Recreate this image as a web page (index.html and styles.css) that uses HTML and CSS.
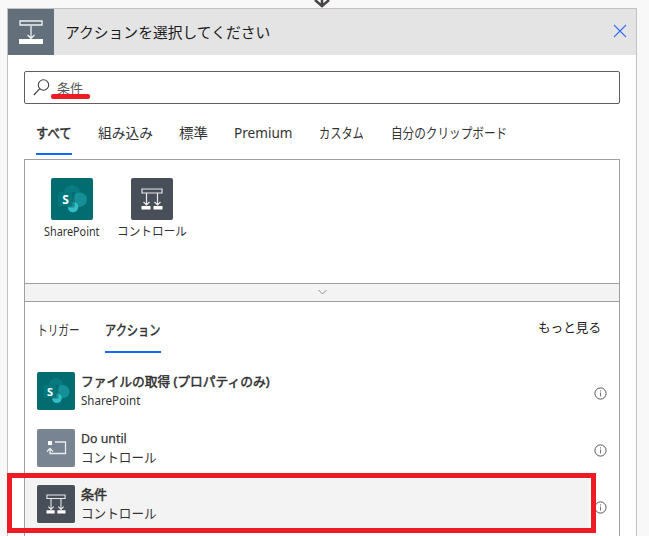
FILE: index.html
```html
<!DOCTYPE html>
<html lang="ja">
<head>
<meta charset="utf-8">
<title>アクションの選択</title>
<link rel="stylesheet" href="styles.css">
</head>
<body>
<svg width="0" height="0" class="defs">
  <symbol id="sharepoint" viewBox="0 0 42 42">
    <rect width="42" height="42" rx="2" fill="#036c70"/>
    <circle cx="21" cy="15" r="8" fill="#087b80"/>
    <circle cx="28.800" cy="21.700" r="7.200" fill="#1a9ba1" opacity=".75"/>
    <circle cx="22" cy="29" r="5.300" fill="#37c6d0" opacity=".9"/>
    <path d="M9 14h13.500q1.500 0 1.500 1.500V28q0 1.500-1.500 1.500H9z" fill="#024f53" opacity=".4"/>
    <rect x="7" y="14" width="14.500" height="14.500" rx="1.200" fill="#03787c"/>
  </symbol>
  <symbol id="control" viewBox="0 0 42 42">
    <rect width="42" height="42" rx="2" fill="#484f58"/>
    <path d="M11 11h20v4H11zM15.500 15.500V27M26.500 15.500V27M12.500 24l3 3 3-3M23.500 24l3 3 3-3" fill="none" stroke="#e8eaec" stroke-width="1.200"/>
    <path d="M10.500 28h9v3.500h-9zM22.500 28h9v3.500h-9z" fill="#fff"/>
  </symbol>
  <symbol id="info" viewBox="0 0 13 13">
    <circle cx="6.500" cy="6.500" r="5.600" fill="none" stroke="#555" stroke-width="1"/>
    <path d="M6.500 5.500v4M6.500 3.300v1.200" stroke="#777" stroke-width="1"/>
  </symbol>
</svg>
<svg class="flow-arrow" width="20" height="9" viewBox="0 0 20 9"><path d="M10 0v6M3 0l7 6 7-6" fill="none" stroke="#484644" stroke-width="2.500"/></svg>
<main class="card">
  <header class="head">
    <svg width="46" height="46" viewBox="0 0 46 46"><rect width="46" height="46" fill="#646f7c"/><path d="M12 12h22v4H12zM23 17v12M19.500 26l3.500 3.300 3.500-3.300" fill="none" stroke="#f0f2f3" stroke-width="1.300"/><path d="M11 30h24v5H11z" fill="#fff"/></svg>
    <h1><span class="title">アクションを選択してください</span></h1>
    <svg class="close" width="14" height="14" viewBox="0 0 14 14"><path d="M1 1l12 12M13 1L1 13" stroke="#3b6ff5" stroke-width="1.200"/></svg>
  </header>
  <div class="search">
    <svg width="17" height="17" viewBox="0 0 17 17"><circle cx="10.500" cy="6" r="5.200" fill="none" stroke="#444" stroke-width="1.100"/><path d="M6.800 9.700L.8 16" stroke="#444" stroke-width="1.200"/></svg>
    <span class="query">条件</span>
  </div>
  <nav class="tabs">
    <div class="tab active t-all"><span>すべて</span></div>
    <div class="tab t-built"><span>組み込み</span></div>
    <div class="tab t-std"><span>標準</span></div>
    <div class="tab t-prem"><span>Premium</span></div>
    <div class="tab t-custom"><span>カスタム</span></div>
    <div class="tab t-clip"><span>自分のクリップボード</span></div>
  </nav>
  <section class="connectors">
    <div class="connector"><div class="sp-icon"><svg width="42" height="42"><use href="#sharepoint"/></svg><i>S</i></div><span class="latin">SharePoint</span></div>
    <div class="connector"><svg width="42" height="42"><use href="#control"/></svg><span>コントロール</span></div>
  </section>
  <div class="collapse"><svg width="9" height="6" viewBox="0 0 9 6"><path d="M.5 1l4 4 4-4" fill="none" stroke="#a08a78" stroke-width="1"/></svg></div>
  <section class="results">
    <div class="result-head">
      <div class="tab t-trigger"><span>トリガー</span></div>
      <div class="tab active t-action"><span>アクション</span></div>
      <div class="more"><span>もっと見る</span></div>
    </div>
    <div class="row first">
      <div class="sp-icon small"><svg width="38" height="38"><use href="#sharepoint"/></svg><i>S</i></div>
      <div class="text"><b class="file">ファイルの取得 (プロパティのみ)</b><span class="sp">SharePoint</span></div>
      <svg class="info" width="13" height="13"><use href="#info"/></svg>
    </div>
    <div class="row">
      <svg width="38" height="38" viewBox="0 0 38 38"><rect width="38" height="38" rx="2" fill="#788491"/><path d="M18 13h10.500v11.500H13V20M10 22.500l3-3 3 3" fill="none" stroke="#e9ecef" stroke-width="1.300"/><path d="M11 12h4v4h-4z" fill="#fff"/></svg>
      <div class="text"><b class="until">Do until</b><span class="ctl">コントロール</span></div>
      <svg class="info" width="13" height="13"><use href="#info"/></svg>
    </div>
    <div class="row chosen">
      <svg width="38" height="38"><use href="#control"/></svg>
      <div class="text"><b>条件</b><span class="ctl">コントロール</span></div>
      <svg class="info" width="13" height="13"><use href="#info"/></svg>
    </div>
  </section>
</main>
<div class="mark-line"></div>
<div class="mark-box"></div>
</body>
</html>
```
FILE: styles.css
```css
* { box-sizing: border-box; }
body {
  margin: 0;
  height: 536px;
  overflow: hidden;
  position: relative;
  background: #f8f8f8;
  color: #333;
  font-family: "Noto Sans", "Noto Sans CJK JP", sans-serif;
}
svg { display: block; flex: none; }
.defs { position: absolute; }
.flow-arrow { position: absolute; left: 312px; top: 0; }

.sp-icon { position: relative; flex: none; }
.sp-icon i {
  position: absolute;
  left: 7px;
  top: 14px;
  width: 15px;
  color: #fff;
  font: 700 12px/15px "Open Sans", sans-serif;
  text-align: center;
}
.small i { left: 6px; top: 12px; width: 14px; font-size: 11px; }

.card {
  margin: 8px 12px 0 7px;
  height: 540px;
  border: 1px solid #c2c2c2;
  background: #fff;
}
.head { display: flex; align-items: center; height: 46px; background: #e4e4e4; }
h1 { margin: 0 0 0 11px; flex: 1; font-size: 15px; font-weight: 400; line-height: 20px; color: #1b1b1b; }
.title { display: inline-block; transform: scaleX(.985); transform-origin: 0 50%; }
.close { margin: 0 9px 3px 0; }

.search {
  display: flex;
  align-items: center;
  height: 33px;
  margin: 16px 16px 0;
  padding-left: 8px;
  border: 1px solid #605e5c;
  border-radius: 2px;
}
.query { margin-left: 7px; font-size: 13px; line-height: 18px; color: #555; }

.tabs { display: flex; gap: 26px; height: 51px; margin: 4px 28px 0; }
.tab { white-space: nowrap; font-size: 14px; line-height: 20px; }
.tabs .tab { height: 47px; padding-top: 15px; }
.tab span { display: inline-block; transform-origin: 0 50%; }
.active { -webkit-text-stroke: .5px #333; border-bottom: 2px solid #0f6bff; }
.t-all { width: 36px; }
.t-all span { transform: scaleX(.88); }
.t-built { width: 55px; }
.t-built span { transform: scaleX(.98); }
.t-std { width: 29px; }
.t-std span { transform: scaleX(1.03); }
.t-prem { width: 59px; }
.t-prem span { transform: scaleX(.97); }
.t-custom { width: 46px; }
.t-custom span { transform: scaleX(.8); }
.t-clip { width: 116px; }
.t-clip span { transform: scaleX(.83); }

.connectors {
  display: flex;
  height: 124px;
  margin: 0 16px;
  padding: 18px 7px 0;
  border: 1px solid #a19f9d;
  border-bottom: 0;
}
.connector { display: flex; flex-direction: column; align-items: center; width: 80px; font-size: 12px; line-height: 20px; white-space: nowrap; }
.connector > span { margin-top: 2px; transform: scaleX(.97); }
.connector .latin { transform: scaleX(.9); }
.collapse {
  display: flex;
  align-items: center;
  justify-content: center;
  height: 19px;
  margin: 0 16px;
  padding-bottom: 2px;
  background: #f3f3f3;
  border: 1px solid #a19f9d;
}
.results { height: 260px; margin: 0 16px; border: solid #a19f9d; border-width: 0 1px; }
.result-head { display: flex; height: 60px; padding: 18px 18px 0 12px; }
.result-head .tab { height: 33px; }
.t-trigger { width: 42px; margin-right: 26px; }
.t-trigger span { transform: scaleX(.76); }
.t-action { width: 56px; }
.t-action span { transform: scaleX(.8); }
.more { margin-left: auto; font-size: 13px; line-height: 14px; color: #222; }
.more span { display: block; transform: scaleX(.97); transform-origin: 100% 50%; }

.row { display: flex; align-items: center; height: 56px; padding: 0 12px; }
.first { height: 58px; }
.text { flex: 1; margin-left: 6px; font-size: 13px; line-height: 20px; white-space: nowrap; }
.text b, .text span { display: block; width: max-content; transform-origin: 0 50%; }
.text b { font-weight: 400; line-height: 18px; -webkit-text-stroke: .5px #333; }
.text .file { transform: scaleX(.98); }
.text .sp { transform: scaleX(.89); }
.text .until { transform: scaleX(.95); -webkit-text-stroke-width: .25px; }
.text .ctl { transform: scaleX(.97); }
.row .info { margin-top: 4px; }
.chosen { height: 50px; margin-top: 3px; background: linear-gradient(90deg, #f3f3f3 564px, #fff 564px); }
.chosen .info { margin-top: 6px; }

.mark-line { position: absolute; left: 51px; top: 94px; width: 39px; height: 5px; border-radius: 2px; background: #ed1c24; }
.mark-box { position: absolute; left: 7px; top: 473px; width: 589px; height: 60px; border: 5px solid #ed1c24; }
```
